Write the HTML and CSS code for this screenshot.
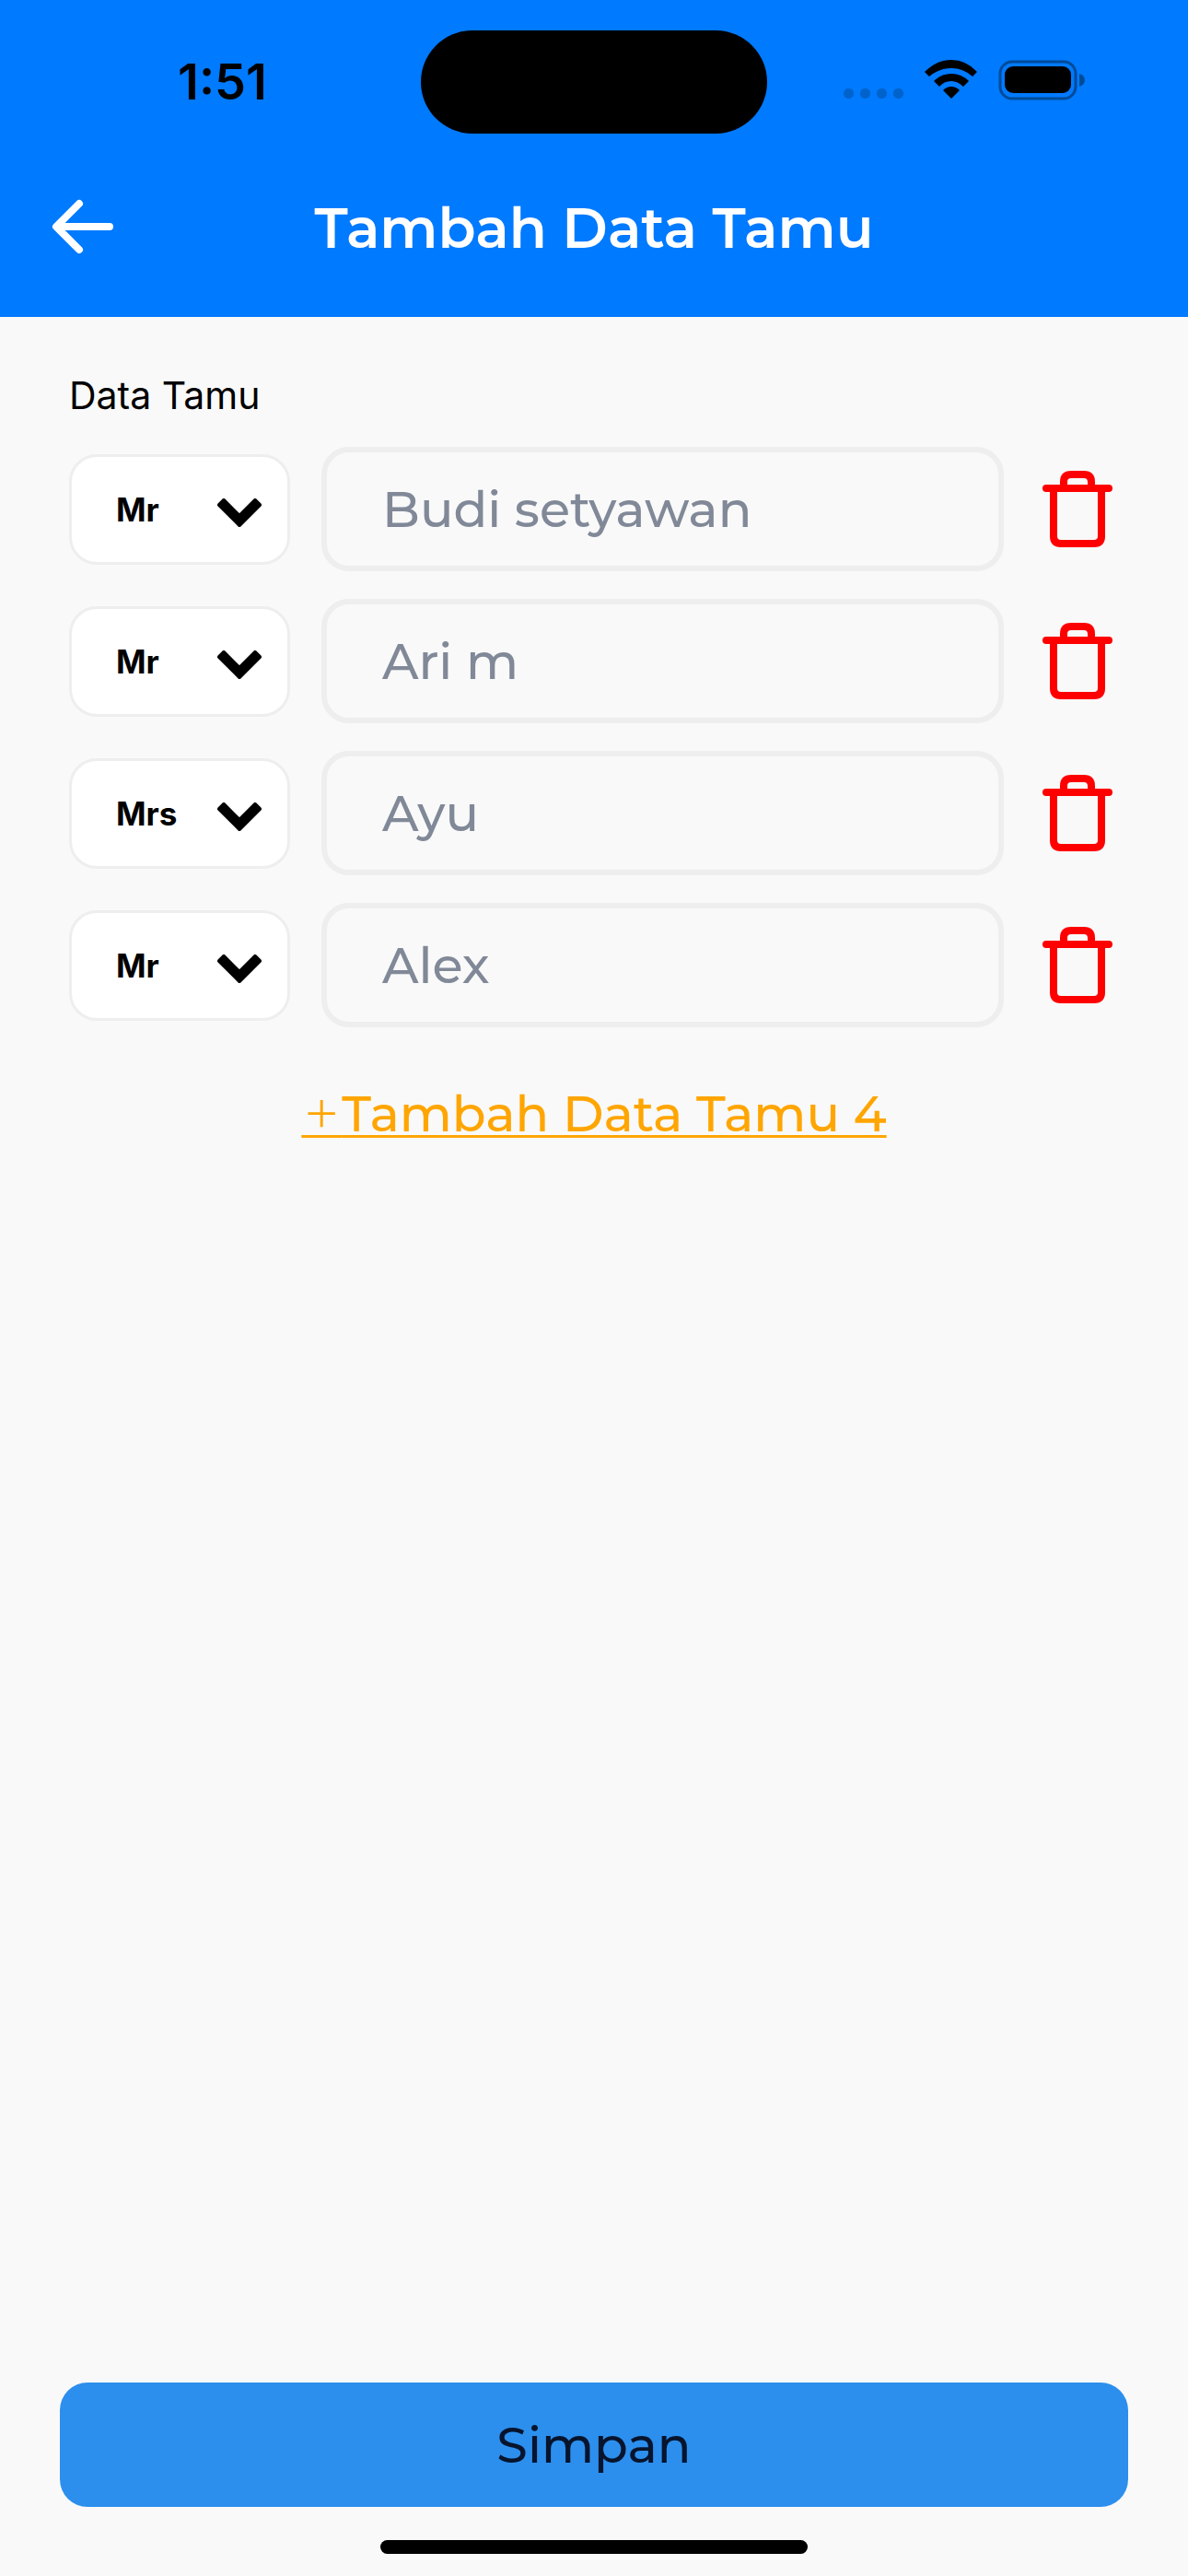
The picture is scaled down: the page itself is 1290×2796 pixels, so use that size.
FILE: index.html
```html
<!DOCTYPE html>
<html lang="id">
<head>
<meta charset="utf-8">
<meta name="viewport" content="width=device-width, initial-scale=1">
<title>Tambah Data Tamu</title>
<link rel="stylesheet" href="styles.css">
</head>
<body>
<svg width="0" height="0" class="sprite" aria-hidden="true">
  <symbol id="chevron" viewBox="0 0 48 32">
    <path d="M7 2 24 19 41 2 46 7 24 29 2 7Z" fill="#000" stroke="#000" stroke-width="4" stroke-linejoin="round"/>
  </symbol>
  <symbol id="trash" viewBox="0 0 76 84">
    <g fill="none" stroke="#f00" stroke-width="8" stroke-linecap="round" stroke-linejoin="round">
      <path d="M4 19H72"/>
      <path d="M23 19V12Q23 4 31 4H45Q53 4 53 12V19"/>
      <path d="M12 19V71Q12 79 20 79H56Q64 79 64 71V19"/>
    </g>
  </symbol>
</svg>
<div class="screen">
  <header class="header">
    <div class="status">
      <span class="time">1:51</span>
      <span class="island"></span>
      <svg class="indicators" viewBox="0 0 264 44" aria-hidden="true">
        <g fill="#0063cc">
          <rect x="0" y="31" width="11" height="11" rx="5"/>
          <rect x="18" y="31" width="11" height="11" rx="5"/>
          <rect x="36" y="31" width="11" height="11" rx="5"/>
          <rect x="54" y="31" width="11" height="11" rx="5"/>
        </g>
        <path d="M88 13Q101 0 117 0Q133 0 145 13L140 18Q130 9 117 9Q104 9 93 18Z"/>
        <path d="M98 23Q106 15 117 15Q128 15 136 23L130 29Q124 23 117 23Q109 23 104 29Z"/>
        <path d="M108 33Q112 29 117 29Q122 29 126 33L117 42Z"/>
        <rect x="170" y="2" width="82" height="40" rx="13" fill="none" stroke="#004b99" stroke-width="3"/>
        <rect x="175" y="7" width="72" height="29" rx="9"/>
        <path d="M256 15Q262 17 262 22Q262 27 256 29Z" fill="#004b99"/>
      </svg>
    </div>
    <div class="navbar">
      <button class="back" type="button" aria-label="Kembali">
        <svg viewBox="0 0 68 60" width="68" height="60" aria-hidden="true">
          <path d="M30 5 5 30 30 55M6 30H63" fill="none" stroke="#fff" stroke-width="8" stroke-linecap="round" stroke-linejoin="round"/>
        </svg>
      </button>
      <h1 class="title">Tambah Data Tamu</h1>
    </div>
  </header>
  <form class="form">
    <fieldset class="guests">
      <legend class="legend">Data Tamu</legend>
      <div class="guest">
        <div class="salutation">
          <select class="select" aria-label="Sapaan tamu 1"><option selected>Mr</option><option>Mrs</option></select>
          <svg class="chevron" aria-hidden="true"><use href="#chevron"/></svg>
        </div>
        <input class="name" type="text" aria-label="Nama tamu 1" value="Budi setyawan">
        <button class="delete" type="button" aria-label="Hapus tamu 1"><svg width="76" height="84"><use href="#trash"/></svg></button>
      </div>
      <div class="guest">
        <div class="salutation">
          <select class="select" aria-label="Sapaan tamu 2"><option selected>Mr</option><option>Mrs</option></select>
          <svg class="chevron" aria-hidden="true"><use href="#chevron"/></svg>
        </div>
        <input class="name" type="text" aria-label="Nama tamu 2" value="Ari m">
        <button class="delete" type="button" aria-label="Hapus tamu 2"><svg width="76" height="84"><use href="#trash"/></svg></button>
      </div>
      <div class="guest">
        <div class="salutation">
          <select class="select" aria-label="Sapaan tamu 3"><option>Mr</option><option selected>Mrs</option></select>
          <svg class="chevron" aria-hidden="true"><use href="#chevron"/></svg>
        </div>
        <input class="name" type="text" aria-label="Nama tamu 3" value="Ayu">
        <button class="delete" type="button" aria-label="Hapus tamu 3"><svg width="76" height="84"><use href="#trash"/></svg></button>
      </div>
      <div class="guest">
        <div class="salutation">
          <select class="select" aria-label="Sapaan tamu 4"><option selected>Mr</option><option>Mrs</option></select>
          <svg class="chevron" aria-hidden="true"><use href="#chevron"/></svg>
        </div>
        <input class="name" type="text" aria-label="Nama tamu 4" value="Alex">
        <button class="delete" type="button" aria-label="Hapus tamu 4"><svg width="76" height="84"><use href="#trash"/></svg></button>
      </div>
    </fieldset>
    <a class="add" href="#"><span class="plus">+</span>Tambah Data Tamu 4</a>
    <button class="save" type="submit">Simpan</button>
  </form>
  <div class="home"></div>
</div>
</body>
</html>
```
FILE: styles.css
```css
* {
  box-sizing: border-box;
}

body {
  margin: 0;
  background: #f9f9f9;
  color: #000;
  font-family: Montserrat, Inter, "Liberation Sans", sans-serif;
}

button {
  padding: 0;
  border: 0;
  background: none;
  cursor: pointer;
}

svg {
  display: block;
}

.sprite {
  position: absolute;
}

.screen {
  display: flex;
  flex-direction: column;
  min-height: 100vh;
}

/* Header */
.header {
  padding: 33px 0 53px;
  background: #007aff;
}

.status {
  display: grid;
  grid-template-columns: 1fr 376px 1fr;
  align-items: center;
  height: 112px;
}

.time {
  padding: 0 0 2px 26px;
  font-family: Inter, "Liberation Sans", sans-serif;
  font-size: 54px;
  font-weight: 600;
  text-align: center;
}

.island {
  height: 112px;
  border-radius: 56px;
  background: #000;
}

.indicators {
  width: 264px;
  height: 44px;
  margin: 0 0 4px 83px;
}

.navbar {
  display: grid;
  grid-template-columns: 68px 1fr 68px;
  align-items: center;
  padding: 56px 56px 0;
}

.title {
  margin: 0;
  padding-top: 4px;
  color: #fff;
  font-size: 60px;
  font-weight: 600;
  line-height: 86px;
  text-align: center;
}

/* Guest form */
.form {
  display: flex;
  flex: 1;
  flex-direction: column;
  align-items: center;
  padding: 60px 65px 36px;
}

.guests {
  display: flex;
  flex-direction: column;
  gap: 30px;
  width: 100%;
  min-width: 0;
  margin: 0;
  padding: 0 17px 0 10px;
  border: 0;
}

.legend {
  padding: 0;
  margin-bottom: 30px;
  font-family: Inter, "Liberation Sans", sans-serif;
  font-size: 41px;
  line-height: 51px;
}

.guest {
  display: grid;
  grid-template-columns: 240px 1fr 76px;
  align-items: center;
}

.salutation {
  display: grid;
  align-items: center;
}

.select {
  grid-area: 1 / 1;
  height: 120px;
  padding: 0 48px;
  border: 3px solid #eee;
  border-radius: 30px;
  background: #fff;
  color: #000;
  font: 700 35px Inter, "Liberation Sans", sans-serif;
  appearance: none;
}

.chevron {
  grid-area: 1 / 1;
  justify-self: end;
  width: 48px;
  height: 32px;
  margin: 8px 31px 0 0;
  pointer-events: none;
}

.name {
  min-width: 0;
  height: 135px;
  margin: 0 42px 0 34px;
  padding: 0 60px;
  border: 6px solid #eee;
  border-radius: 30px;
  background: transparent;
  color: #818998;
  font: 500 54px Montserrat, Inter, "Liberation Sans", sans-serif;
}

.add {
  margin: 60px 0;
  color: #ffa500;
  font-size: 54px;
  font-weight: 500;
  line-height: 68px;
  text-decoration: underline;
  text-decoration-thickness: 3px;
  text-underline-offset: 4px;
  text-decoration-skip-ink: none;
}

.plus {
  font-family: Inter, "Liberation Sans", sans-serif;
  font-size: 68px;
  font-weight: 200;
  line-height: 0;
}

.save {
  width: 100%;
  height: 135px;
  margin-top: auto;
  border-radius: 30px;
  background: #2c8fed;
  color: #07142d;
  font: 500 54px Montserrat, Inter, "Liberation Sans", sans-serif;
}

.home {
  width: 36%;
  height: 15px;
  margin: 0 auto 24px;
  border-radius: 8px;
  background: #000;
}
```
